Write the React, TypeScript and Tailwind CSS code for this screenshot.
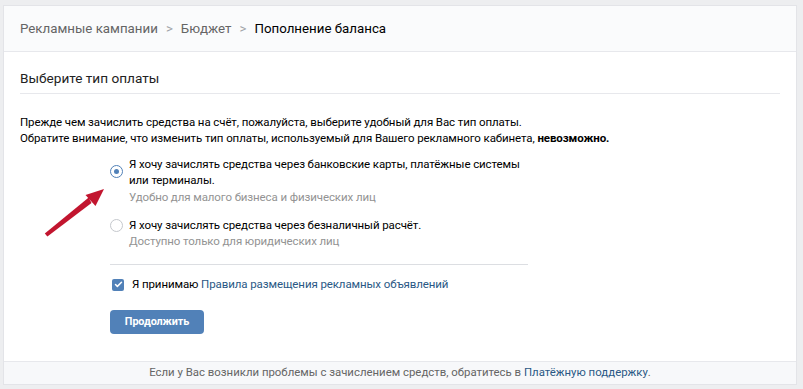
import { Check } from 'lucide-react';

const Arrow = () => (
  <svg className="absolute left-[40px] top-[180px]" width="70" height="65" viewBox="0 0 70 65">
    <polygon points="4.8,53.6 7.4,56.4 51.5,23 48.7,17.6" fill="#c2152f" />
    <polygon points="64,9 55.5,26 45.5,15" fill="#c2152f" />
  </svg>
);

const App = () => {
  return (
    <div className="relative w-[803px] h-[389px] bg-[#edeef0] pt-[5px] pl-[3px] pr-[6px] pb-[4px] font-['Roboto',Arial,sans-serif] overflow-hidden">
      <div className="bg-white border border-[#e3e4e8] h-full flex flex-col">
        {/* breadcrumbs */}
        <div className="h-[46px] shrink-0 bg-[#fafbfc] border-b border-[#e7e8ec] flex items-center px-[16px] text-[13.3px] text-[#656565]">
          <span>Рекламные кампании</span>
          <span className="mx-[8px] text-[#a0a3a8]">&gt;</span>
          <span>Бюджет</span>
          <span className="mx-[8px] text-[#a0a3a8]">&gt;</span>
          <span className="text-black">Пополнение баланса</span>
        </div>

        <div className="px-[16px] flex-1">
          <div className="h-[42px] flex items-end pb-[5px] border-b border-[#e7e8ec] text-[13.6px] text-[#222]">
            Выберите тип оплаты
          </div>

          <div className="pt-[20px] text-[11.5px] tracking-[-0.1px] leading-[16px] text-black">
            <p>Прежде чем зачислить средства на счёт, пожалуйста, выберите удобный для Вас тип оплаты.</p>
            <p>
              Обратите внимание, что изменить тип оплаты, используемый для Вашего рекламного кабинета,{' '}
              <b>невозможно.</b>
            </p>
          </div>

          <div className="ml-[90px] mt-[10px] w-[418px] text-[11.5px] tracking-[-0.1px]">
            <div className="flex gap-[6px]">
              <div className="mt-[9px] w-[13px] h-[13px] rounded-full border border-[#5181b8] flex items-center justify-center shrink-0">
                <div className="w-[5px] h-[5px] rounded-full bg-[#5181b8]" />
              </div>
              <div>
                <div className="leading-[16px] text-black whitespace-nowrap">
                  Я хочу зачислять средства через банковские карты, платёжные системы
                  <br />
                  или терминалы.
                </div>
                <div className="mt-[1px] leading-[16px] text-[#939393]">Удобно для малого бизнеса и физических лиц</div>
              </div>
            </div>

            <div className="flex gap-[6px] mt-[12px]">
              <div className="mt-[1.5px] w-[13px] h-[13px] rounded-full border border-[#c5c8cd] shrink-0" />
              <div>
                <div className="leading-[16px] text-black">Я хочу зачислять средства через безналичный расчёт.</div>
                <div className="leading-[16px] text-[#939393]">Доступно только для юридических лиц</div>
              </div>
            </div>

            <div className="mt-[15px] border-t border-[#dcdee2]" />

            <div className="mt-[11px] ml-[2px] flex items-center gap-[8px] leading-[17px]">
              <div className="w-[12px] h-[12px] rounded-[2px] bg-[#5181b8] flex items-center justify-center">
                <Check className="w-[9px] h-[9px] text-white" strokeWidth={4} />
              </div>
              <span className="text-black">
                Я принимаю <span className="text-[#2a5885]">Правила размещения рекламных объявлений</span>
              </span>
            </div>

            <button className="mt-[17px] h-[24px] w-[94px] rounded-[4px] bg-[#5181b8] text-white text-[10.8px] font-bold">
              Продолжить
            </button>
          </div>
        </div>

        <div className="h-[23px] shrink-0 bg-[#f7f8fa] border-t border-[#e7e8ec] flex items-center justify-center text-[11.4px] text-[#656565]">
          Если у Вас возникли проблемы с зачислением средств, обратитесь в&nbsp;
          <span className="text-[#2a5885]">Платёжную поддержку</span>.
        </div>
      </div>
      <Arrow />
    </div>
  );
};

export default App;
